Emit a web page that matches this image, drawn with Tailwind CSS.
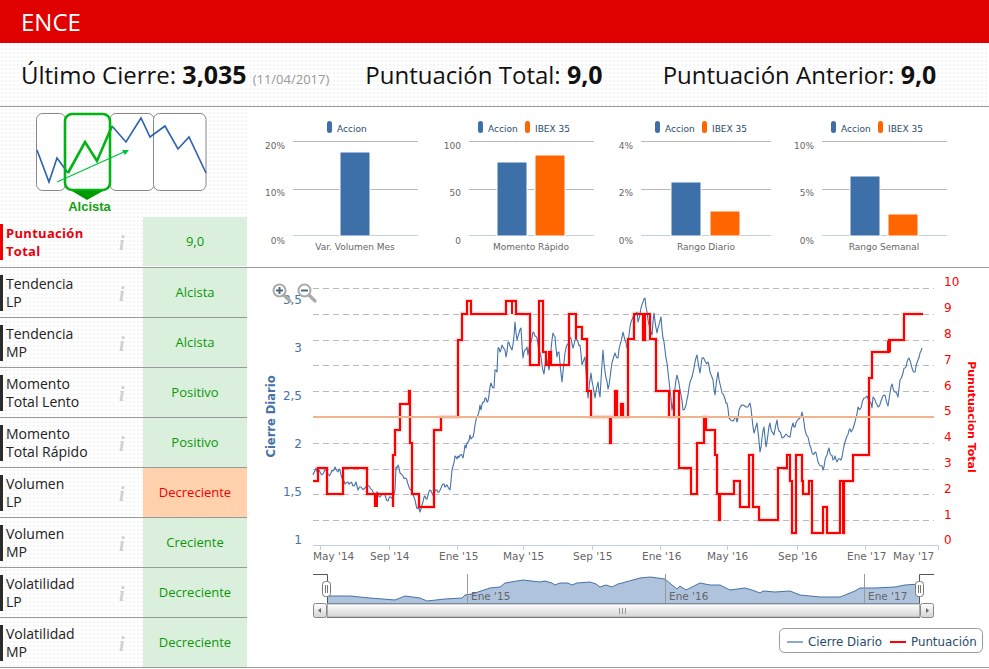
<!DOCTYPE html>
<html lang="es">
<head>
<meta charset="utf-8">
<title>ENCE</title>
<script src="https://cdn.jsdelivr.net/npm/@tailwindcss/browser@4"></script>
</head>
<body class="bg-white font-['Open_Sans',sans-serif] w-[989px] h-[669px] overflow-hidden">

<!-- Header -->
<div class="h-[43px] bg-[#e00000] flex items-center pl-[21px] text-white text-[24px] font-medium">ENCE</div>

<!-- Stats -->
<div class="h-[64px] border-b border-[#999] flex items-baseline pl-[21px] pt-[13px] text-[24px] leading-[36px] text-[#111] bg-[radial-gradient(#f5f5f5_1px,transparent_1px)] bg-[size:4px_4px]">
  <span>Último Cierre: <b class="font-bold text-[25px]">3,035</b></span>
  <span class="ml-[6px] text-[13px] text-[#999]">(11/04/2017)</span>
  <span class="ml-[36px]">Puntuación Total: <b class="font-bold text-[25px]">9,0</b></span>
  <span class="ml-[60px]">Puntuación Anterior: <b class="font-bold text-[25px]">9,0</b></span>
</div>

<!-- Top band -->
<div class="h-[161px] border-b border-[#999] flex">
  <div class="w-[247px] shrink-0 flex flex-col bg-[radial-gradient(#f5f5f5_1px,transparent_1px)] bg-[size:4px_4px]">
    <svg class="w-[247px] h-[110px] block" viewBox="0 107 247 110">
      <g fill="#fff" stroke="#888" stroke-width="1">
        <rect x="36.5" y="113.5" width="29" height="77" rx="6"/>
        <rect x="110" y="113.5" width="44" height="77" rx="6"/>
        <rect x="153.5" y="113.5" width="52.5" height="77" rx="6"/>
      </g>
      <polyline fill="none" stroke="#2a62ad" stroke-width="1.6" points="37,150 49,182 57,158 68,173"/>
      <polyline fill="none" stroke="#2a62ad" stroke-width="1.6" points="112,126 126,142 141,118 150,137 165,126 178,149 189,137 206,173"/>
      <rect x="65" y="114" width="45" height="76" rx="7" fill="none" stroke="#00b414" stroke-width="2.6"/>
      <polyline fill="none" stroke="#00b414" stroke-width="2.6" points="68,173 85,142 97,161 112,126"/>
      <line x1="57" y1="182" x2="126" y2="151" stroke="#00c040" stroke-width="1.2"/>
      <polygon points="129,150 122,150 125,155" fill="#00c040"/>
      <polygon points="72,191 103,191 87,200" fill="#009900"/>
      <text x="89.5" y="211" text-anchor="middle" font-size="13" font-weight="700" fill="#12a012" class="font-['Liberation_Sans',sans-serif]">Alcista</text>
    </svg>
    <div class="h-[50px] flex">
      <div class="w-[143px] flex items-start pt-[7px]">
        <div class="w-[3px] h-[36px] bg-[#f00000] shrink-0"></div>
        <div class="ml-[3px] w-[100px] text-[13px] leading-[18px] font-bold text-[#e8000f] tracking-[0.3px]">Puntuación Total</div>
        <span class="ml-[13px] mt-[9px] font-['Liberation_Serif',serif] italic font-bold text-[20px] leading-[20px] text-[#d0d0d0]">i</span>
      </div>
      <div class="w-[104px] h-[49px] bg-[#dbf0dc] flex items-center justify-center text-[13px] text-[#0a980a]">9,0</div>
    </div>
  </div>

  <!-- Small bar charts -->
  <div class="flex-1 flex font-['DejaVu_Sans',sans-serif]">
    <svg class="w-[188px] h-[160px] block" viewBox="247 107 188 160">
      <rect x="327" y="121" width="5" height="12" rx="2.5" fill="#3d6fa9"/>
      <text x="337" y="132" font-size="9" fill="#274b6d">Accion</text>
      <g stroke-width="1"><line x1="293" x2="418" y1="141.5" y2="141.5" stroke="#b8b8b8"/><line x1="293" x2="418" y1="189.5" y2="189.5" stroke="#b8b8b8"/><line x1="293" x2="418" y1="235.5" y2="235.5" stroke="#c0d0e0"/></g>
      <rect x="340" y="152" width="30" height="84" fill="#3d6fa9" stroke="#fff"/>
      <g font-size="9" fill="#666" text-anchor="end"><text x="285" y="149">20%</text><text x="285" y="196">10%</text><text x="285" y="244">0%</text></g>
      <text x="355" y="250" font-size="9" fill="#666" text-anchor="middle">Var. Volumen Mes</text>
    </svg>
    <svg class="w-[175px] h-[160px] block" viewBox="435 107 175 160">
      <rect x="478" y="121" width="5" height="12" rx="2.5" fill="#3d6fa9"/>
      <text x="488" y="132" font-size="9" fill="#274b6d">Accion</text>
      <rect x="525" y="121" width="5" height="12" rx="2.5" fill="#ff6600"/>
      <text x="535" y="132" font-size="9" fill="#274b6d">IBEX 35</text>
      <g stroke-width="1"><line x1="469" x2="594" y1="141.5" y2="141.5" stroke="#b8b8b8"/><line x1="469" x2="594" y1="189.5" y2="189.5" stroke="#b8b8b8"/><line x1="469" x2="594" y1="235.5" y2="235.5" stroke="#c0d0e0"/></g>
      <rect x="497" y="162" width="30" height="74" fill="#3d6fa9" stroke="#fff"/>
      <rect x="535" y="155" width="30" height="81" fill="#ff6600" stroke="#fff"/>
      <g font-size="9" fill="#666" text-anchor="end"><text x="461" y="149">100</text><text x="461" y="196">50</text><text x="461" y="244">0</text></g>
      <text x="531" y="250" font-size="9" fill="#666" text-anchor="middle">Momento Rápido</text>
    </svg>
    <svg class="w-[180px] h-[160px] block" viewBox="610 107 180 160">
      <rect x="655" y="121" width="5" height="12" rx="2.5" fill="#3d6fa9"/>
      <text x="665" y="132" font-size="9" fill="#274b6d">Accion</text>
      <rect x="702" y="121" width="5" height="12" rx="2.5" fill="#ff6600"/>
      <text x="712" y="132" font-size="9" fill="#274b6d">IBEX 35</text>
      <g stroke-width="1"><line x1="641" x2="771" y1="141.5" y2="141.5" stroke="#b8b8b8"/><line x1="641" x2="771" y1="189.5" y2="189.5" stroke="#b8b8b8"/><line x1="641" x2="771" y1="235.5" y2="235.5" stroke="#c0d0e0"/></g>
      <rect x="671" y="182" width="30" height="54" fill="#3d6fa9" stroke="#fff"/>
      <rect x="710" y="211" width="30" height="25" fill="#ff6600" stroke="#fff"/>
      <g font-size="9" fill="#666" text-anchor="end"><text x="633" y="149">4%</text><text x="633" y="196">2%</text><text x="633" y="244">0%</text></g>
      <text x="706" y="250" font-size="9" fill="#666" text-anchor="middle">Rango Diario</text>
    </svg>
    <svg class="w-[199px] h-[160px] block" viewBox="790 107 199 160">
      <rect x="831" y="121" width="5" height="12" rx="2.5" fill="#3d6fa9"/>
      <text x="841" y="132" font-size="9" fill="#274b6d">Accion</text>
      <rect x="878" y="121" width="5" height="12" rx="2.5" fill="#ff6600"/>
      <text x="888" y="132" font-size="9" fill="#274b6d">IBEX 35</text>
      <g stroke-width="1"><line x1="822" x2="947" y1="141.5" y2="141.5" stroke="#b8b8b8"/><line x1="822" x2="947" y1="189.5" y2="189.5" stroke="#b8b8b8"/><line x1="822" x2="947" y1="235.5" y2="235.5" stroke="#c0d0e0"/></g>
      <rect x="850" y="176" width="30" height="60" fill="#3d6fa9" stroke="#fff"/>
      <rect x="888" y="214" width="30" height="22" fill="#ff6600" stroke="#fff"/>
      <g font-size="9" fill="#666" text-anchor="end"><text x="814" y="149">10%</text><text x="814" y="196">5%</text><text x="814" y="244">0%</text></g>
      <text x="884" y="250" font-size="9" fill="#666" text-anchor="middle">Rango Semanal</text>
    </svg>
  </div>
</div>

<!-- Lower band -->
<div class="flex">
  <div class="w-[247px] shrink-0 bg-[radial-gradient(#f5f5f5_1px,transparent_1px)] bg-[size:4px_4px] text-[14px] leading-[18px] text-[#222]">
    <div class="h-[50px] border-b border-[#999] flex">
      <div class="w-[143px] flex items-start pt-[7px]"><div class="w-[3px] h-[36px] bg-[#2b2b2b] shrink-0"></div><div class="ml-[3px] w-[100px]">Tendencia<br>LP</div><span class="ml-[13px] mt-[9px] font-['Liberation_Serif',serif] italic font-bold text-[20px] leading-[20px] text-[#d0d0d0]">i</span></div>
      <div class="w-[104px] pb-[2px] bg-[#dbf0dc] flex items-center justify-center text-[13px] text-[#0a980a]">Alcista</div>
    </div>
    <div class="h-[50px] border-b border-[#999] flex">
      <div class="w-[143px] flex items-start pt-[7px]"><div class="w-[3px] h-[36px] bg-[#2b2b2b] shrink-0"></div><div class="ml-[3px] w-[100px]">Tendencia<br>MP</div><span class="ml-[13px] mt-[9px] font-['Liberation_Serif',serif] italic font-bold text-[20px] leading-[20px] text-[#d0d0d0]">i</span></div>
      <div class="w-[104px] pb-[2px] bg-[#dbf0dc] flex items-center justify-center text-[13px] text-[#0a980a]">Alcista</div>
    </div>
    <div class="h-[50px] border-b border-[#999] flex">
      <div class="w-[143px] flex items-start pt-[7px]"><div class="w-[3px] h-[36px] bg-[#2b2b2b] shrink-0"></div><div class="ml-[3px] w-[100px]">Momento<br>Total Lento</div><span class="ml-[13px] mt-[9px] font-['Liberation_Serif',serif] italic font-bold text-[20px] leading-[20px] text-[#d0d0d0]">i</span></div>
      <div class="w-[104px] pb-[2px] bg-[#dbf0dc] flex items-center justify-center text-[13px] text-[#0a980a]">Positivo</div>
    </div>
    <div class="h-[50px] border-b border-[#999] flex">
      <div class="w-[143px] flex items-start pt-[7px]"><div class="w-[3px] h-[36px] bg-[#2b2b2b] shrink-0"></div><div class="ml-[3px] w-[100px]">Momento<br>Total Rápido</div><span class="ml-[13px] mt-[9px] font-['Liberation_Serif',serif] italic font-bold text-[20px] leading-[20px] text-[#d0d0d0]">i</span></div>
      <div class="w-[104px] pb-[2px] bg-[#dbf0dc] flex items-center justify-center text-[13px] text-[#0a980a]">Positivo</div>
    </div>
    <div class="h-[50px] border-b border-[#999] flex">
      <div class="w-[143px] flex items-start pt-[7px]"><div class="w-[3px] h-[36px] bg-[#2b2b2b] shrink-0"></div><div class="ml-[3px] w-[100px]">Volumen<br>LP</div><span class="ml-[13px] mt-[9px] font-['Liberation_Serif',serif] italic font-bold text-[20px] leading-[20px] text-[#d0d0d0]">i</span></div>
      <div class="w-[104px] pb-[2px] bg-[#ffd2ad] flex items-center justify-center text-[13px] text-[#f00000]">Decreciente</div>
    </div>
    <div class="h-[50px] border-b border-[#999] flex">
      <div class="w-[143px] flex items-start pt-[7px]"><div class="w-[3px] h-[36px] bg-[#2b2b2b] shrink-0"></div><div class="ml-[3px] w-[100px]">Volumen<br>MP</div><span class="ml-[13px] mt-[9px] font-['Liberation_Serif',serif] italic font-bold text-[20px] leading-[20px] text-[#d0d0d0]">i</span></div>
      <div class="w-[104px] pb-[2px] bg-[#dbf0dc] flex items-center justify-center text-[13px] text-[#0a980a]">Creciente</div>
    </div>
    <div class="h-[50px] border-b border-[#999] flex">
      <div class="w-[143px] flex items-start pt-[7px]"><div class="w-[3px] h-[36px] bg-[#2b2b2b] shrink-0"></div><div class="ml-[3px] w-[100px]">Volatilidad<br>LP</div><span class="ml-[13px] mt-[9px] font-['Liberation_Serif',serif] italic font-bold text-[20px] leading-[20px] text-[#d0d0d0]">i</span></div>
      <div class="w-[104px] pb-[2px] bg-[#dbf0dc] flex items-center justify-center text-[13px] text-[#0a980a]">Decreciente</div>
    </div>
    <div class="h-[50px] border-b border-[#999] flex">
      <div class="w-[143px] flex items-start pt-[7px]"><div class="w-[3px] h-[36px] bg-[#2b2b2b] shrink-0"></div><div class="ml-[3px] w-[100px]">Volatilidad<br>MP</div><span class="ml-[13px] mt-[9px] font-['Liberation_Serif',serif] italic font-bold text-[20px] leading-[20px] text-[#d0d0d0]">i</span></div>
      <div class="w-[104px] pb-[2px] bg-[#dbf0dc] flex items-center justify-center text-[13px] text-[#0a980a]">Decreciente</div>
    </div>
  </div>

  <!-- Main chart: coordinates in the viewBox are page pixels -->
  <div class="w-[742px] h-[400px] border-b border-[#999]">
    <svg class="w-[742px] h-[399px] block font-['DejaVu_Sans',sans-serif]" viewBox="247 268 742 399">
      <defs>
        <linearGradient id="thumb" x1="0" y1="0" x2="0" y2="1"><stop offset="0" stop-color="#fff"/><stop offset="1" stop-color="#d4d4d4"/></linearGradient>
      </defs>

      <!-- grid -->
      <g stroke="#bbb" stroke-width="1" stroke-dasharray="6 4">
        <line x1="313" x2="934" y1="288.5" y2="288.5"/><line x1="313" x2="934" y1="314.5" y2="314.5"/>
        <line x1="313" x2="934" y1="340.5" y2="340.5"/><line x1="313" x2="934" y1="365.5" y2="365.5"/>
        <line x1="313" x2="934" y1="391.5" y2="391.5"/><line x1="313" x2="934" y1="443.5" y2="443.5"/>
        <line x1="313" x2="934" y1="469.5" y2="469.5"/><line x1="313" x2="934" y1="494.5" y2="494.5"/>
        <line x1="313" x2="934" y1="520.5" y2="520.5"/>
      </g>
      <line x1="313" x2="938" y1="545.5" y2="545.5" stroke="#c0d0e0"/>
      <g stroke="#c0d0e0">
        <line x1="320.5" x2="320.5" y1="545" y2="550"/><line x1="389.5" x2="389.5" y1="545" y2="550"/>
        <line x1="457.5" x2="457.5" y1="545" y2="550"/><line x1="523.5" x2="523.5" y1="545" y2="550"/>
        <line x1="592.5" x2="592.5" y1="545" y2="550"/><line x1="660.5" x2="660.5" y1="545" y2="550"/>
        <line x1="727.5" x2="727.5" y1="545" y2="550"/><line x1="797.5" x2="797.5" y1="545" y2="550"/>
        <line x1="865.5" x2="865.5" y1="545" y2="550"/><line x1="938.5" x2="938.5" y1="545" y2="550"/>
      </g>

      <!-- cierre diario -->
      <polyline id="cierre" fill="none" stroke="#4572a7" stroke-width="1.1" stroke-linejoin="round" points="313,475 316,468 318,473 320,472 323,474 325,470 328,474 331,473 333,471 335,467 338,472 340,470 343,480 345,484 348,482 350,483 353,486 356,482 358,490 361,487 365,488 369,486 372,490 376,495 378,493 380,497 383,494 385,495 388,501 391,497 393,498 395,490 396,467 398,465 400,473 403,476 405,478 408,484 411,490 414,497 416,505 418,508 420,512 422,505 424,497 426,499 428,495 430,490 432,493 434,494 437,490 439,492 441,488 444,484 446,486 448,487 450,490 452,470 453,466 455,456 457,459 458,456 460,455 463,458 465,445 466,448 468,442 470,435 471,439 473,437 475,425 478,415 480,405 481,410 483,402 485,398 487,402 488,401 490,387 491,383 494,388 495,370 497,372 498,348 500,352 502,345 505,350 506,357 508,342 510,346 512,350 514,336 515,322 517,340 519,333 521,328 523,358 525,350 527,347 528,355 530,345 533,332 535,336 537,338 540,353 542,365 544,374 546,357 549,370 551,350 553,333 555,337 557,357 559,352 562,382 565,353 567,345 570,337 572,344 573,348 575,340 578,342 580,345 582,365 585,357 588,398 591,373 593,386 595,398 598,382 600,397 603,350 604,363 606,378 608,389 610,378 612,363 615,353 618,358 620,345 623,332 625,340 627,348 629,335 631,322 634,315 637,312 638,322 641,308 643,302 645,298 647,312 648,320 650,328 652,335 654,313 657,333 659,325 661,317 663,338 665,350 667,363 670,390 672,410 675,388 677,375 679,383 681,395 683,410 686,405 688,395 690,382 694,368 697,355 700,373 702,358 705,361 708,362 710,372 713,380 715,395 718,372 720,384 722,393 725,399 727,403 729,418 733,421 735,417 737,422 739,410 742,405 746,407 750,403 752,418 754,433 757,423 760,452 762,438 764,427 766,447 768,434 770,423 772,432 774,435 777,420 779,431 782,438 786,434 790,437 793,423 795,427 797,421 800,418 802,412 805,430 808,437 810,446 812,453 815,452 817,457 818,462 821,466 823,470 825,460 827,455 829,448 831,455 833,460 835,456 837,462 840,459 842,457 845,442 847,436 849,430 851,432 855,422 857,414 858,407 861,408 864,398 867,396 870,402 872,408 873,397 876,403 878,407 881,401 885,395 888,406 890,393 892,384 895,392 898,397 900,380 903,373 905,368 907,362 909,358 912,368 915,372 918,360 920,353 922,348"/>

      <!-- puntuacion: soft halo, then the line itself -->
      <polyline fill="none" stroke="#ff0000" stroke-opacity="0.15" stroke-width="4.5" points="313,481 318,481 318,468 327,468 327,494 343,494 343,468 367,468 367,494 375,494 375,507 375,494 393,494 393,507 393,455 395,455 395,430 400,430 400,404 409,404 409,391 410,391 410,443 412,443 412,494 419,494 419,507 434,507 434,430 441,430 441,417 458,417 458,340 462,340 462,314 467,314 467,301 471,301 471,314 506,314 506,301 516,301 516,314 530,314 530,365 539,365 539,301 543,301 543,352 546,352 546,365 549,365 549,352 551,352 551,365 569,365 569,314 576,314 576,339 576,327 582,327 582,339 587,339 587,391 591,391 591,417 610,417 610,443 611,443 611,417 615,417 615,391 617,391 617,417 621,417 621,404 623,404 623,417 628,417 628,339 634,339 634,314 643,314 643,340 645,340 645,314 650,314 650,339 656,339 656,391 669,391 669,417 674,417 674,391 679,391 679,468 691,468 691,494 697,494 697,443 704,443 704,417 706,417 706,430 715,430 715,455 717,455 717,494 719,494 719,520 720,520 720,494 734,494 734,481 740,481 740,507 749,507 749,455 753,455 753,507 759,507 759,520 778,520 778,468 787,468 787,455 790,455 790,481 792,481 792,533 796,533 796,455 802,455 802,481 803,481 803,494 809,494 809,481 812,481 812,533 823,533 823,507 827,507 827,533 840,533 840,481 843,481 843,533 844,533 844,481 853,481 853,455 869,455 869,378 872,378 872,352 889,352 889,340 904,340 904,314 923,314"/>
      <polyline fill="none" stroke="#ff0000" stroke-width="2" points="313,481 318,481 318,468 327,468 327,494 343,494 343,468 367,468 367,494 375,494 375,507 375,494 393,494 393,507 393,455 395,455 395,430 400,430 400,404 409,404 409,391 410,391 410,443 412,443 412,494 419,494 419,507 434,507 434,430 441,430 441,417 458,417 458,340 462,340 462,314 467,314 467,301 471,301 471,314 506,314 506,301 516,301 516,314 530,314 530,365 539,365 539,301 543,301 543,352 546,352 546,365 549,365 549,352 551,352 551,365 569,365 569,314 576,314 576,339 576,327 582,327 582,339 587,339 587,391 591,391 591,417 610,417 610,443 611,443 611,417 615,417 615,391 617,391 617,417 621,417 621,404 623,404 623,417 628,417 628,339 634,339 634,314 643,314 643,340 645,340 645,314 650,314 650,339 656,339 656,391 669,391 669,417 674,417 674,391 679,391 679,468 691,468 691,494 697,494 697,443 704,443 704,417 706,417 706,430 715,430 715,455 717,455 717,494 719,494 719,520 720,520 720,494 734,494 734,481 740,481 740,507 749,507 749,455 753,455 753,507 759,507 759,520 778,520 778,468 787,468 787,455 790,455 790,481 792,481 792,533 796,533 796,455 802,455 802,481 803,481 803,494 809,494 809,481 812,481 812,533 823,533 823,507 827,507 827,533 840,533 840,481 843,481 843,533 844,533 844,481 853,481 853,455 869,455 869,378 872,378 872,352 889,352 889,340 904,340 904,314 923,314"/>
      <rect x="511" y="301" width="2" height="13" fill="#f00"/>
      <rect x="887" y="341" width="4" height="11" fill="#f00"/>
      <rect x="375" y="494" width="3" height="13" fill="#f00"/>

      <line x1="313" x2="934" y1="417" y2="417" stroke="#f0b48c" stroke-width="2"/>

      <!-- axes text -->
      <g font-size="12" fill="#4572a7" text-anchor="end">
        <text x="302" y="304">3,5</text><text x="302" y="352">3</text><text x="302" y="400">2,5</text>
        <text x="302" y="448">2</text><text x="302" y="496">1,5</text><text x="302" y="544">1</text>
      </g>
      <g font-size="12" fill="#f00">
        <text x="944" y="286">10</text><text x="944" y="312">9</text><text x="944" y="338">8</text>
        <text x="944" y="364">7</text><text x="944" y="390">6</text><text x="944" y="415">5</text>
        <text x="944" y="441">4</text><text x="944" y="467">3</text><text x="944" y="493">2</text>
        <text x="944" y="519">1</text><text x="944" y="544">0</text>
      </g>
      <text transform="translate(275 416.5) rotate(-90)" text-anchor="middle" font-size="11.5" font-weight="700" fill="#4572a7">Cierre Diario</text>
      <text transform="translate(968 417) rotate(90)" text-anchor="middle" font-size="11" font-weight="700" fill="#f00">Punutuacion Total</text>
      <g font-size="10.5" fill="#666">
        <text x="313" y="560">May '14</text><text x="370" y="560">Sep '14</text><text x="439" y="560">Ene '15</text>
        <text x="503" y="560">May '15</text><text x="573" y="560">Sep '15</text><text x="642" y="560">Ene '16</text>
        <text x="707" y="560">May '16</text><text x="778" y="560">Sep '16</text><text x="847" y="560">Ene '17</text>
        <text x="893" y="560">May '17</text>
      </g>

      <!-- zoom buttons -->
      <g fill="none" stroke="#aaa">
        <circle cx="279.5" cy="290.5" r="6" stroke-width="2"/><line x1="284" y1="295" x2="290" y2="301" stroke-width="3.2" stroke-linecap="round"/>
        <circle cx="304.5" cy="290.5" r="6" stroke-width="2"/><line x1="309" y1="295" x2="315" y2="301" stroke-width="3.2" stroke-linecap="round"/>
      </g>
      <path d="M276 290.5h7M279.5 287v7" stroke="#4a6a80" stroke-width="2" fill="none"/>
      <path d="M301 290.5h7" stroke="#4a6a80" stroke-width="2" fill="none"/>

      <!-- navigator -->
      <polygon fill="#afc3dd" stroke="none" points="327,603 327,596 350,596 370,598 395,600 405,596 420,598 427,601 445,599 462,598 465,595 472,594 490,588 500,587 505,583 523,580 540,582 545,581 552,583 555,585 560,583 568,583 572,585 577,583 590,582 596,584 600,587 606,585 612,587 618,584 622,583 640,578 650,577 665,579 672,585 677,589 680,586 686,590 700,583 710,585 720,585 730,590 745,588 752,590 760,593 763,591 775,592 790,591 800,595 820,597 840,597 855,591 860,588 875,588 895,587 905,585 920,584 920,603"/>
      <polyline fill="none" stroke="#4572a7" stroke-width="1" points="327,596 350,596 370,598 395,600 405,596 420,598 427,601 445,599 462,598 465,595 472,594 490,588 500,587 505,583 523,580 540,582 545,581 552,583 555,585 560,583 568,583 572,585 577,583 590,582 596,584 600,587 606,585 612,587 618,584 622,583 640,578 650,577 665,579 672,585 677,589 680,586 686,590 700,583 710,585 720,585 730,590 745,588 752,590 760,593 763,591 775,592 790,591 800,595 820,597 840,597 855,591 860,588 875,588 895,587 905,585 920,584"/>
      <g stroke="#999"><line x1="467.5" x2="467.5" y1="574" y2="603"/><line x1="665.5" x2="665.5" y1="574" y2="603"/><line x1="864.5" x2="864.5" y1="574" y2="603"/></g>
      <g font-size="10.5" fill="#666"><text x="471" y="600">Ene '15</text><text x="669" y="600">Ene '16</text><text x="868" y="600">Ene '17</text></g>
      <line x1="327" x2="920" y1="603.5" y2="603.5" stroke="#4a6a90"/>
      <path d="M313 574.5H327.5V581M327.5 596V617" fill="none" stroke="#555"/>
      <path d="M934 574.5H919.5V581M919.5 596V617" fill="none" stroke="#555"/>

      <!-- scrollbar -->
      <rect x="327.5" y="604" width="592" height="13" fill="url(#thumb)" stroke="#aaa"/>
      <line x1="327" x2="920" y1="617.5" y2="617.5" stroke="#777"/>
      <path d="M619.5 608v6M622.5 608v6M625.5 608v6" stroke="#999"/>
      <rect x="313.5" y="603.5" width="13" height="14" rx="2" fill="url(#thumb)" stroke="#888"/>
      <polygon points="318,610.5 321,608 321,613" fill="#666"/>
      <rect x="920.5" y="603.5" width="13" height="14" rx="2" fill="url(#thumb)" stroke="#888"/>
      <polygon points="929,610.5 926,608 926,613" fill="#666"/>
      <g fill="#fff" stroke="#777"><rect x="322.5" y="581.5" width="8" height="15" rx="3"/><rect x="915.5" y="581.5" width="8" height="15" rx="3"/></g>
      <path d="M325.5 585v8M327.5 585v8M918.5 585v8M920.5 585v8" stroke="#777"/>

      <!-- legend -->
      <rect x="779.5" y="628.5" width="203" height="24" rx="5" fill="#fff" stroke="#999"/>
      <line x1="787" x2="803" y1="642" y2="642" stroke="#8fa9cc" stroke-width="2"/>
      <text x="808" y="646" font-size="11.8" fill="#274b6d">Cierre Diario</text>
      <line x1="890" x2="906" y1="642" y2="642" stroke="#f00" stroke-width="2"/>
      <text x="911" y="646" font-size="11.8" fill="#274b6d">Puntuación</text>
    </svg>
  </div>
</div>

<script>
  // the daily close is noisy: fill in the traced knots with small repeatable wiggles
  const cierre = document.getElementById("cierre");
  const knots = cierre.getAttribute("points").split(" ").map((p) => p.split(",").map(Number));
  const dense = [];
  knots.forEach(([x, y], i) => {
    dense.push(x + "," + y);
    const next = knots[i + 1];
    if (!next || next[0] - x < 2) return;
    const mx = (x + next[0]) / 2;
    const my = (y + next[1]) / 2 + 2.2 * Math.sin(i * 2.4);
    dense.push(mx + "," + my);
  });
  cierre.setAttribute("points", dense.join(" "));
</script>
</body>
</html>
